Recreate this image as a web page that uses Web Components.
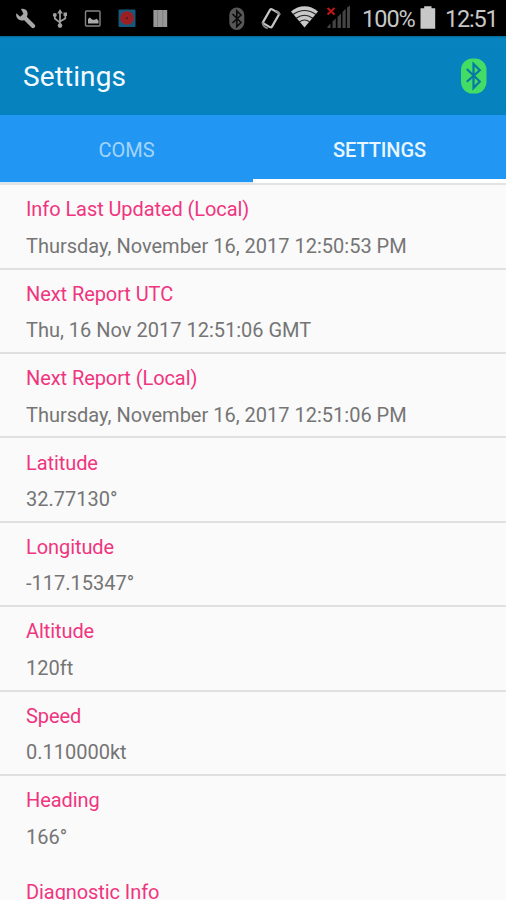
<!DOCTYPE html>
<html lang="en">
<head>
<meta charset="utf-8">
<title>Settings</title>
<style>
    html, body {
        margin: 0;
        height: 100%;
        overflow: hidden;
    }

    body {
        font-family: Roboto, "Liberation Sans", sans-serif;
        background: #fafafa;
    }
</style>
</head>
<body>
<settings-page></settings-page>

<script>
class StatusBar extends HTMLElement {
    constructor() {
        super();
        this.attachShadow({ mode: "open" });
        this.shadowRoot.innerHTML = `
        <style>
        :host {
            display: flex;
            align-items: center;
            justify-content: space-between;
            box-sizing: border-box;
            height: 36px;
            padding: 0 8px 0 15px;
            background: #000;
            color: #c6c6c6;
        }

        div {
            display: flex;
            align-items: center;
        }

        svg {
            display: block;
            flex: none;
        }

        .left {
            gap: 16px;
        }

        .battery-text, .clock {
            font-size: 23.5px;
            line-height: 36px;
            padding-top: 2px;
            white-space: nowrap;
        }

        .battery-text {
            width: 51px;
            margin-left: 10px;
            letter-spacing: -1px;
        }

        .clock {
            width: 53px;
            margin-left: 8px;
            letter-spacing: -1.200px;
        }
        </style>

        <div class="left">
            <svg width="21" height="36" viewBox="15 0 21 36"><path fill="none" stroke="#a8a8a8" stroke-width="4.3" stroke-linecap="round" d="M24 17l9 9"/><path fill="#a8a8a8" d="M21 9c5-1 8 3 6 7.500l-3.500 4C19 21 15.500 18 16.200 13.200l4.100 3.600 3.100-3z"/></svg>
            <svg width="16" height="36" viewBox="52 0 16 36"><path fill="none" stroke="#a0a0a0" stroke-width="1.700" d="M60 13v12M54.800 16v2.500l5.200 4.200M65.300 15v3.500L60 21.500"/><path fill="#a0a0a0" d="M60 9l2.800 4.500h-5.600zM63.500 12.500h3.500v3.500h-3.500z"/><circle cx="54.800" cy="15" r="2" fill="#a0a0a0"/><circle cx="60" cy="25.600" r="2.300" fill="#a0a0a0"/></svg>
            <svg width="18" height="36" viewBox="84 0 18 36"><rect x="85.500" y="11" width="14.500" height="15" rx="1" fill="none" stroke="#858585" stroke-width="1.400"/><path fill="#aaa" d="M88 23.500v-4.500l1.800-1.500 2.600 2.200 2.300 0 2-1 1.800 2v2.800z"/></svg>
            <svg width="19" height="36" viewBox="118 0 19 36"><rect x="118.500" y="9.500" width="17" height="17.500" rx="1" fill="#15587b"/><circle cx="127" cy="18" r="6.800" fill="#a51e20"/><circle cx="127" cy="18" r="4.400" fill="none" stroke="#6f2632" stroke-width="1" stroke-dasharray="2 1"/><circle cx="127" cy="18" r="1.500" fill="#611c25"/></svg>
            <svg width="15" height="36" viewBox="153 0 15 36"><path fill="#989898" d="M153.400 10h13.800v17h-13.800z"/><path stroke="#808080" d="M157.500 10v17M162.800 10v17"/></svg>
        </div>

        <div>
            <svg width="17" height="36" viewBox="228 0 17 36"><rect x="229.300" y="7.500" width="15" height="22.500" rx="7.500" fill="#575757"/><path fill="none" stroke="#0b0b0b" stroke-width="1.700" d="M232.500 14l8.500 8.500-4.200 4V11l4.200 4-8.500 8"/></svg>
            <svg style="margin-left:16px" width="21" height="36" viewBox="261 0 21 36"><rect x="266" y="10" width="10" height="16.500" rx="1.500" transform="rotate(30 271 18.300)" fill="none" stroke="#c4c4c4" stroke-width="2.200"/><path fill="none" stroke="#888" stroke-width="1.800" d="M275.500 10.500q3.500 1 4.500 4.500M262.300 22q.5 5 5.500 6.500"/></svg>
            <svg style="margin-left:9px" width="28" height="36" viewBox="291 0 28 36"><path fill="#c8c8c8" d="M291 11.500c8-7 19-7 27 0L304.500 27.500z"/><path fill="none" stroke="#222" stroke-width="1.100" d="M293 14.500q11.500-8 23 0M296.200 18.200q8.300-6 16.600 0M299.300 22q5.200-4 10.400 0"/></svg>
            <svg style="margin-left:7px" width="26" height="36" viewBox="326 0 26 36"><path fill="#444" d="M327.500 28v-1.500l3-3V28zM332.500 28v-6.500l3.300-3V28zM337.500 28V17l3.500-3.500V28zM342.500 28V12l3.200-3.200V28zM347 28V7.500l3-2V28z"/><path stroke="#c31515" stroke-width="2" d="M327.500 8l7 6.500M334.500 8l-7 6.500"/></svg>
            <span class="battery-text">100%</span>
            <svg style="margin-left:7px" width="17" height="36" viewBox="420 0 17 36"><path fill="#c8c8c8" d="M424.200 6.300h7.300v1.900h3.700v20.500h-14.700V8.200h3.700z"/></svg>
            <span class="clock">12:51</span>
        </div>
        `;
    }
}

class AppBar extends HTMLElement {
    constructor() {
        super();
        this.attachShadow({ mode: "open" });
        this.shadowRoot.innerHTML = `
        <style>
        :host {
            display: flex;
            align-items: center;
            justify-content: space-between;
            box-sizing: border-box;
            height: 79px;
            padding: 0 19px 0 23px;
            background: linear-gradient(#05668f 0, #0783c0 2px, #0581be 100%);
        }

        h1 {
            margin: 0;
            padding-top: 2px;
            font-size: 28px;
            font-weight: 400;
            line-height: 34px;
            letter-spacing: 0.1px;
            color: #f4fbff;
        }
        </style>
        <h1><slot></slot></h1>
        <svg width="27" height="36" viewBox="0 0 27 36"><rect x="1" y=".5" width="25.500" height="35" rx="11.500" fill="#43dd66"/><path fill="none" stroke="#0878a4" stroke-width="2.200" d="M6.800 11l13 12.500-6.300 6.500V6l6.300 6.300-13 11.500"/></svg>
        `;
    }
}

class TabItem extends HTMLElement {
    constructor() {
        super();
        this.attachShadow({ mode: "open" });
        this.shadowRoot.innerHTML = `
        <style>
        :host {
            display: flex;
            flex: 1;
            align-items: center;
            justify-content: center;
            box-sizing: border-box;
            padding-top: 5px;
            border-bottom: 4px solid transparent;
            font-size: 20px;
            color: #a3d5fb;
        }

        :host([selected]) {
            border-bottom-color: #fff;
            color: #e9f6ff;
            font-weight: 500;
            letter-spacing: -0.1px;
        }
        </style>
        <slot></slot>
        `;
    }
}

class TabBar extends HTMLElement {
    constructor() {
        super();
        this.attachShadow({ mode: "open" });
        this.shadowRoot.innerHTML = `
        <style>
        :host {
            display: flex;
            height: 68px;
            background: linear-gradient(#2196f3 67px, #d5e6f8 67px);
        }
        </style>
        <slot></slot>
        `;
    }
}

class InfoRow extends HTMLElement {
    constructor() {
        super();
        this.attachShadow({ mode: "open" });
        this.shadowRoot.innerHTML = `
        <style>
        :host {
            display: block;
            box-sizing: border-box;
            height: 84.4px;
            padding: 12.200px 26px 0;
            border-bottom: 2px solid #e0e0e0;
            font-size: 20px;
            line-height: 24px;
            white-space: nowrap;
        }

        :host([last]) {
            border-bottom: none;
        }

        .title {
            color: #f0357f;
            letter-spacing: -0.080px;
        }

        .value {
            margin-top: 12.500px;
            color: #757575;
        }
        </style>
        <div class="title"><slot name="title"></slot></div>
        <div class="value"><slot></slot></div>
        `;
    }
}

class SettingsPage extends HTMLElement {
    constructor() {
        super();
        this.attachShadow({ mode: "open" });
        this.render();
    }

    render() {
        this.shadowRoot.innerHTML = `
        <style>
        :host {
            display: block;
            height: 900px;
            overflow: hidden;
        }

        main {
            padding-top: 0.200px;
            border-top: 2px solid #e3e3e3;
        }

        .section {
            padding: 19.500px 26px 0;
            font-size: 20px;
            line-height: 24px;
            letter-spacing: -0.080px;
            color: #f0357f;
        }
        </style>
        <status-bar></status-bar>
        <app-bar>Settings</app-bar>
        <tab-bar>
            <tab-item>COMS</tab-item>
            <tab-item selected>SETTINGS</tab-item>
        </tab-bar>
        <main>
            <info-row><span slot="title">Info Last Updated (Local)</span>Thursday, November 16, 2017 12:50:53 PM</info-row>
            <info-row><span slot="title">Next Report UTC</span>Thu, 16 Nov 2017 12:51:06 GMT</info-row>
            <info-row><span slot="title">Next Report (Local)</span>Thursday, November 16, 2017 12:51:06 PM</info-row>
            <info-row><span slot="title">Latitude</span>32.77130°</info-row>
            <info-row><span slot="title">Longitude</span>-117.15347°</info-row>
            <info-row><span slot="title">Altitude</span>120ft</info-row>
            <info-row><span slot="title">Speed</span>0.110000kt</info-row>
            <info-row last><span slot="title">Heading</span>166°</info-row>
            <div class="section">Diagnostic Info</div>
        </main>
        `;
    }
}

customElements.define("status-bar", StatusBar);
customElements.define("app-bar", AppBar);
customElements.define("tab-item", TabItem);
customElements.define("tab-bar", TabBar);
customElements.define("info-row", InfoRow);
customElements.define("settings-page", SettingsPage);
</script>
</body>
</html>
